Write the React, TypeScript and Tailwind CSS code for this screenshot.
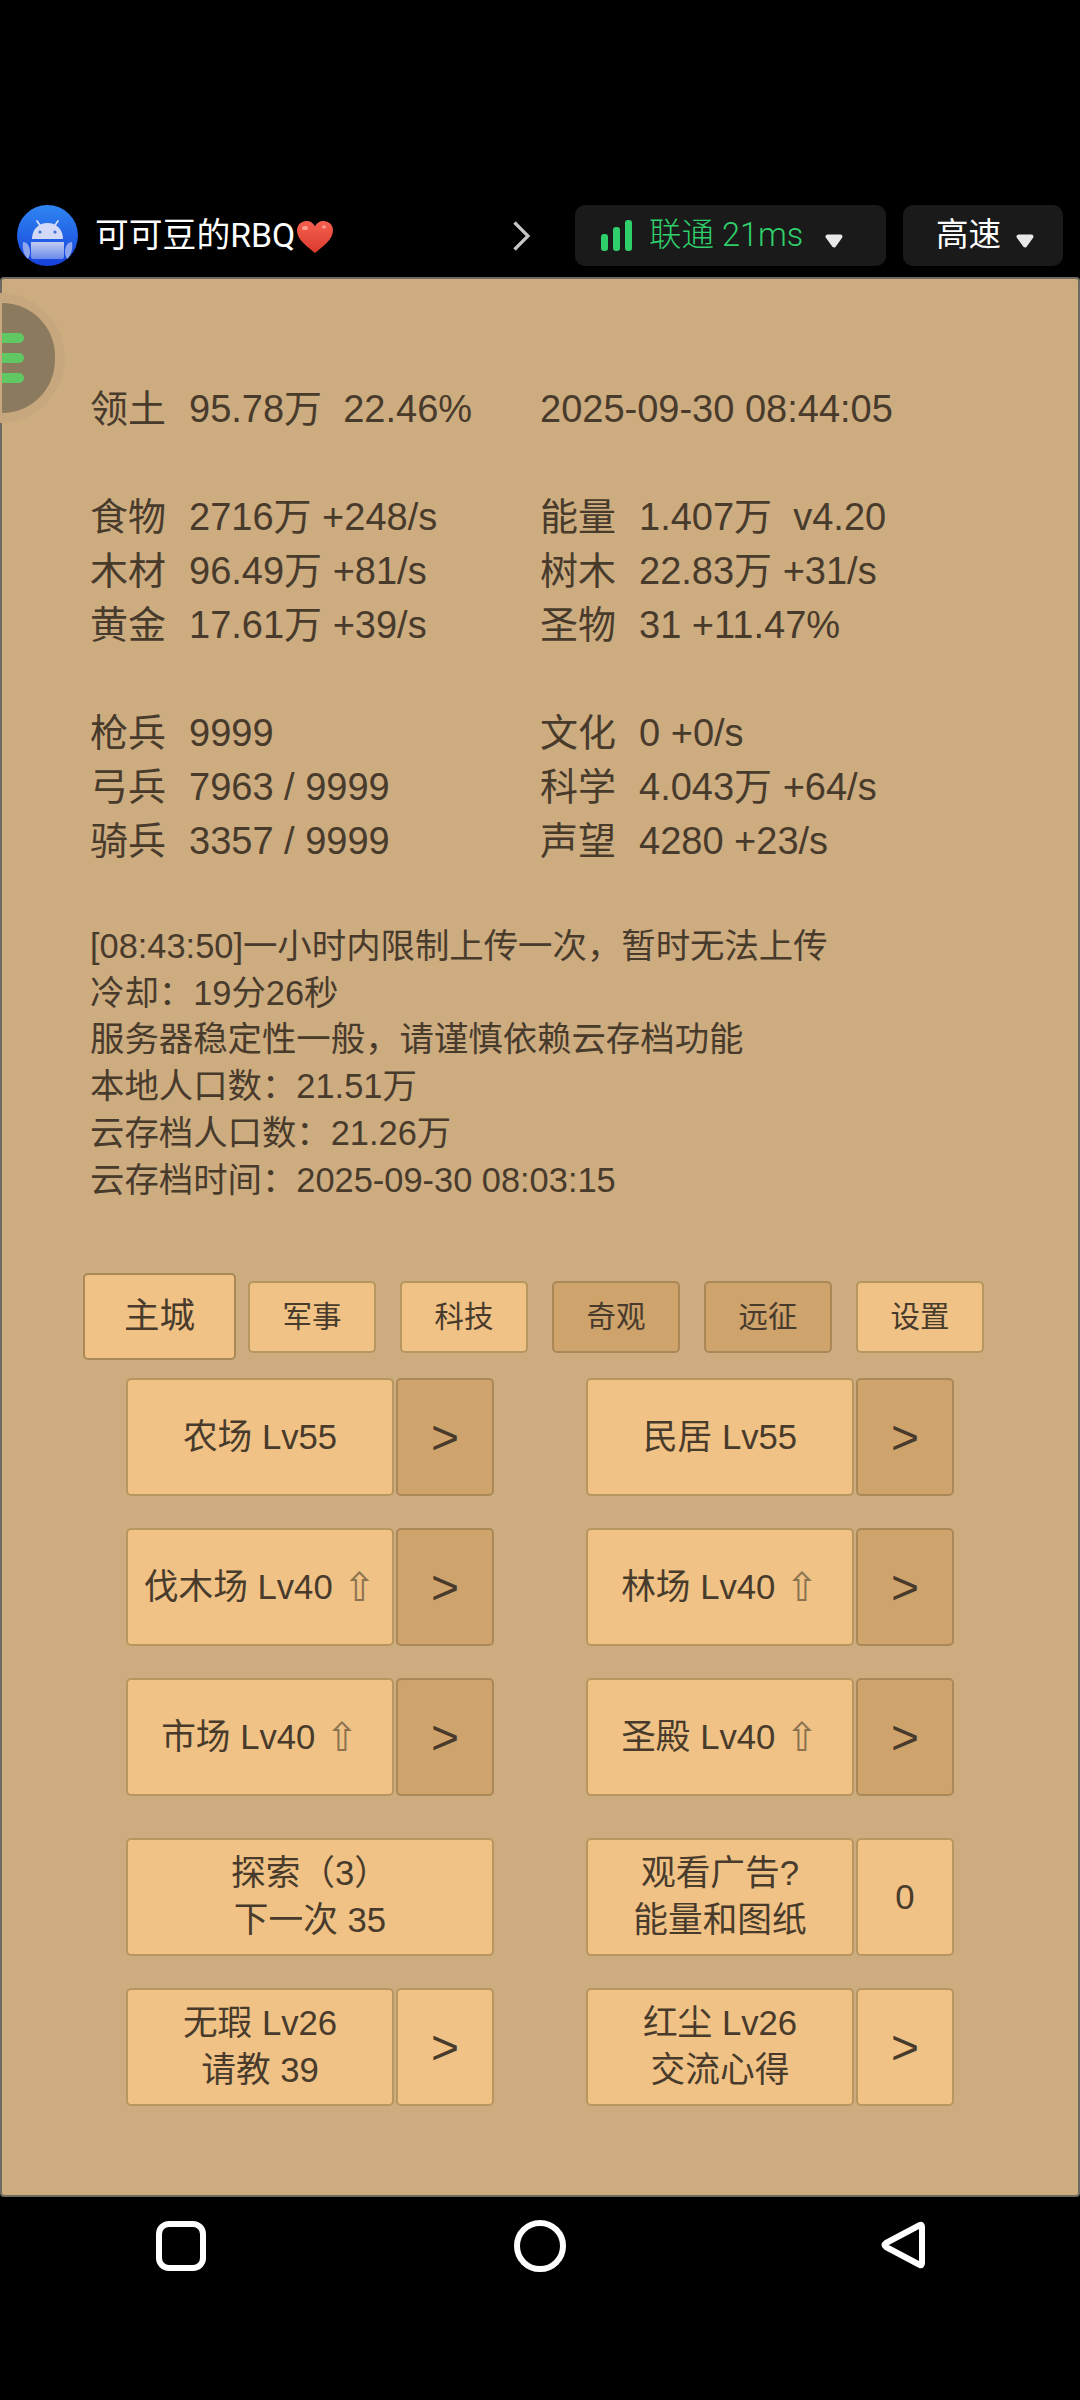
import React from "react";

const Caret = ({ className }: { className: string }) => (
  <svg width="18" height="14" viewBox="0 0 18 14" className={className}>
    <path d="M2.5 2.5 H15.5 L9 11.5 Z" fill="#e8e8e8" stroke="#e8e8e8" strokeWidth="4" strokeLinejoin="round" />
  </svg>
);

const Avatar = () => (
  <svg width="61" height="61" viewBox="0 0 61 61">
    <defs>
      <linearGradient id="av" x1="0" y1="0" x2="0" y2="1">
        <stop offset="0" stopColor="#2f86f2" />
        <stop offset="1" stopColor="#1740dc" />
      </linearGradient>
      <linearGradient id="bd" x1="0" y1="0" x2="0" y2="1">
        <stop offset="0" stopColor="#c3ccf5" />
        <stop offset="1" stopColor="#6a8aea" />
      </linearGradient>
    </defs>
    <circle cx="30.5" cy="30.5" r="30.5" fill="url(#av)" />
    <path d="M20 16 L23.5 21 M41 16 L37.5 21" stroke="#d8def8" strokeWidth="1.8" strokeLinecap="round" />
    <path d="M15 34 C15 24 22 18 30.5 18 C39 18 46 24 46 34 Z" fill="#d3daf8" />
    <circle cx="23" cy="27" r="1.6" fill="#3f6fe0" />
    <circle cx="38" cy="27" r="1.6" fill="#3f6fe0" />
    <path d="M14 37 H47 V52 Q47 54 45 54 H16 Q14 54 14 52 Z" fill="url(#bd)" />
    <path d="M6 37 C10 37 13 41 13 47 C13 50 12 52 11 54 C7 51 5 44 6 37 Z" fill="#8ea6ee" />
    <path d="M55 37 C51 37 48 41 48 47 C48 50 49 52 50 54 C54 51 56 44 55 37 Z" fill="#8ea6ee" />
  </svg>
);

const Heart = () => (
  <svg width="38" height="34" viewBox="0 0 38 34" className="ml-[1px] mt-[2px]">
    <defs>
      <linearGradient id="ht" x1="0" y1="0" x2="0" y2="1">
        <stop offset="0" stopColor="#f4604f" />
        <stop offset="1" stopColor="#dc3a2e" />
      </linearGradient>
    </defs>
    <path d="M19 33 C12 27 1 20 1 10.5 C1 4.5 5.5 1 10.5 1 C14 1 17.5 3 19 6.5 C20.5 3 24 1 27.5 1 C32.5 1 37 4.5 37 10.5 C37 20 26 27 19 33 Z" fill="url(#ht)" />
    <ellipse cx="9" cy="8" rx="3" ry="2" fill="#ff9d90" />
    <ellipse cx="28" cy="7" rx="2" ry="1.4" fill="#ff9d90" />
  </svg>
);

const Header = () => (
  <div className="flex h-[61px] items-center pl-[17px] mt-[205px] mb-[11px] text-white">
    <Avatar />
    <div className="ml-[17px] flex w-[417px] items-center text-[33.8px] leading-[40px] font-['Roboto','Noto_Sans_CJK_SC',sans-serif]">
      可可豆的RBQ
      <Heart />
    </div>
    <svg width="20" height="32" viewBox="0 0 20 32" className="shrink-0">
      <path d="M2.5 2.5 L16 16 L2.5 29.5" fill="none" stroke="#c4c4c4" strokeWidth="3.2" />
    </svg>
    <div className="ml-[43px] flex h-[61px] w-[311px] items-center rounded-[10px] bg-[#1a1a1a] pl-[26px] text-[32.5px] font-light text-[#2fcf6b] font-['Roboto','Noto_Sans_CJK_SC',sans-serif]">
      <svg width="31" height="32" viewBox="0 0 31 32" className="mr-[17px]">
        <rect x="0" y="14" width="7" height="17" rx="3" fill="#2fd06c" />
        <rect x="12" y="7" width="7" height="24" rx="3" fill="#2fd06c" />
        <rect x="24" y="0" width="7" height="31" rx="3" fill="#2fd06c" />
      </svg>
      <span className="whitespace-pre">联通 21ms</span>
      <Caret className="ml-[22px] mt-[10px]" />
    </div>
    <div className="ml-[17px] flex h-[61px] w-[160px] items-center rounded-[10px] bg-[#1a1a1a] pl-[33px] text-[32.5px] text-white font-['Noto_Sans_CJK_SC',sans-serif]">
      <span className="whitespace-pre -translate-y-[3px]">高速</span>
      <Caret className="ml-[15px] mt-[10px]" />
    </div>
  </div>
);

const MenuButton = () => (
  <div className="absolute left-[-10px] top-[14px] flex h-[130px] w-[73px] items-center justify-center rounded-r-[65px] bg-[#c7a87e]">
    <div className="flex h-[110px] w-[53px] flex-col items-start justify-center gap-[10px] rounded-r-[55px] bg-[#8c7a5e]">
      <div className="h-[10px] w-[22px] rounded-r-[5px] bg-[#5fc863]" />
      <div className="h-[10px] w-[22px] rounded-r-[5px] bg-[#5fc863]" />
      <div className="h-[10px] w-[22px] rounded-r-[5px] bg-[#5fc863]" />
    </div>
  </div>
);

const Stat = ({ label, value }: { label?: string; value?: string }) => (
  <div className="flex h-[54px] items-center whitespace-pre">
    {label && <span className="w-[99px]">{label}</span>}
    {value && <span>{value}</span>}
  </div>
);

const stats: [string, string][][] = [
  [["领土", "95.78万  22.46%"], ["", "2025-09-30 08:44:05"]],
  [["", ""], ["", ""]],
  [["食物", "2716万 +248/s"], ["能量", "1.407万  v4.20"]],
  [["木材", "96.49万 +81/s"], ["树木", "22.83万 +31/s"]],
  [["黄金", "17.61万 +39/s"], ["圣物", "31 +11.47%"]],
  [["", ""], ["", ""]],
  [["枪兵", "9999"], ["文化", "0 +0/s"]],
  [["弓兵", "7963 / 9999"], ["科学", "4.043万 +64/s"]],
  [["骑兵", "3357 / 9999"], ["声望", "4280 +23/s"]],
];

const log = [
  "[08:43:50]一小时内限制上传一次，暂时无法上传",
  "冷却：19分26秒",
  "服务器稳定性一般，请谨慎依赖云存档功能",
  "本地人口数：21.51万",
  "云存档人口数：21.26万",
  "云存档时间：2025-09-30 08:03:15",
];

const tabs: { t: string; dark?: boolean }[] = [
  { t: "军事" },
  { t: "科技" },
  { t: "奇观", dark: true },
  { t: "远征", dark: true },
  { t: "设置" },
];

const Up = () => <span className="ml-[10px] leading-[40px] text-[#8b7350] font-['DejaVu_Sans',sans-serif] text-[40px]">⇧</span>;

const Btn = ({ children, dark, className }: { children: React.ReactNode; dark?: boolean; className?: string }) => (
  <div
    className={`flex h-[118px] items-center justify-center rounded-[5px] border-2 text-center text-[34.7px] leading-[47px] ${
      dark ? "border-[#ab8858] bg-[#cfa36c]" : "border-[#b8965f] bg-[#f0c285]"
    } ${className ?? ""}`}
  >
    {children}
  </div>
);

const Arrow = ({ dark }: { dark?: boolean }) => (
  <Btn dark={dark} className="w-[98px] shrink-0 !text-[48px]">
    {">"}
  </Btn>
);

const Pair = ({ main, dark, side }: { main: React.ReactNode; dark?: boolean; side?: React.ReactNode }) => (
  <div className="flex w-[368px] gap-[2px]">
    <Btn className="flex-1">{main}</Btn>
    {side ?? <Arrow dark={dark} />}
  </div>
);

const Row = ({ children, className }: { children: React.ReactNode; className?: string }) => (
  <div className={`flex gap-[92px] pl-[124px] ${className ?? ""}`}>{children}</div>
);

const Nav = () => (
  <div className="flex flex-1 items-start justify-between pl-[156px] pr-[155px] pt-[23px]">
    <svg width="50" height="52" viewBox="0 0 50 52">
      <rect x="3" y="4" width="44" height="44" rx="10" fill="none" stroke="#fff" strokeWidth="6" />
    </svg>
    <svg width="52" height="52" viewBox="0 0 52 52" className="mr-[8px]">
      <circle cx="26" cy="26" r="23" fill="none" stroke="#fff" strokeWidth="6" />
    </svg>
    <svg width="44" height="50" viewBox="0 0 44 50">
      <path d="M39 5 Q41 4 41 7 V43 Q41 46 39 45 L5 27 Q2 25 5 23 Z" fill="none" stroke="#fff" strokeWidth="6" strokeLinejoin="round" />
    </svg>
  </div>
);

export default function App() {
  return (
    <div className="flex h-[2400px] w-[1080px] flex-col overflow-hidden bg-black font-['Liberation_Sans','Noto_Sans_CJK_SC',sans-serif] text-[#483b2c]">
      <Header />
      <div className="relative h-[1920px] shrink-0 rounded-[4px] border-2 border-[#6e6a62] bg-[#cdac80]">
        <MenuButton />
        <div className="grid grid-cols-[450px_1fr] pl-[88px] pt-[103px] text-[38px] leading-[54px]">
          {stats.flat().map(([l, v], i) => (
            <Stat key={i} label={l} value={v} />
          ))}
        </div>
        <div className="mt-[55px] pl-[88px] text-[34.4px] leading-[46.7px]">
          {log.map((l) => (
            <div key={l}>{l}</div>
          ))}
        </div>
        <div className="mt-[70px] flex h-[87px] items-center pl-[81px]">
          <div className="flex h-[87px] w-[153px] items-center justify-center rounded-[5px] border-2 border-[#ab8858] bg-[#f0c285] text-[35.5px]">
            主城
          </div>
          {tabs.map(({ t, dark }) => (
            <div
              key={t}
              className={`mx-[12px] flex h-[72px] w-[128px] items-center justify-center rounded-[5px] border-2 text-[29.5px] ${
                dark ? "border-[#ab8858] bg-[#cfa36c]" : "border-[#b8965f] bg-[#f0c285]"
              }`}
            >
              {t}
            </div>
          ))}
        </div>
        <div className="mt-[18px] flex flex-col gap-[32px]">
          <Row>
            <Pair main="农场 Lv55" dark />
            <Pair main="民居 Lv55" dark />
          </Row>
          <Row>
            <Pair main={<>伐木场 Lv40<Up /></>} dark />
            <Pair main={<>林场 Lv40<Up /></>} dark />
          </Row>
          <Row>
            <Pair main={<>市场 Lv40<Up /></>} dark />
            <Pair main={<>圣殿 Lv40<Up /></>} dark />
          </Row>
          <Row className="mt-[10px]">
            <Btn className="w-[368px]">
              探索（3）
              <br />
              下一次 35
            </Btn>
            <Pair
              main={
                <>
                  观看广告?
                  <br />
                  能量和图纸
                </>
              }
              side={<Btn className="w-[98px] shrink-0">0</Btn>}
            />
          </Row>
          <Row>
            <Pair
              main={
                <>
                  无瑕 Lv26
                  <br />
                  请教 39
                </>
              }
            />
            <Pair
              main={
                <>
                  红尘 Lv26
                  <br />
                  交流心得
                </>
              }
            />
          </Row>
        </div>
      </div>
      <Nav />
    </div>
  );
}
